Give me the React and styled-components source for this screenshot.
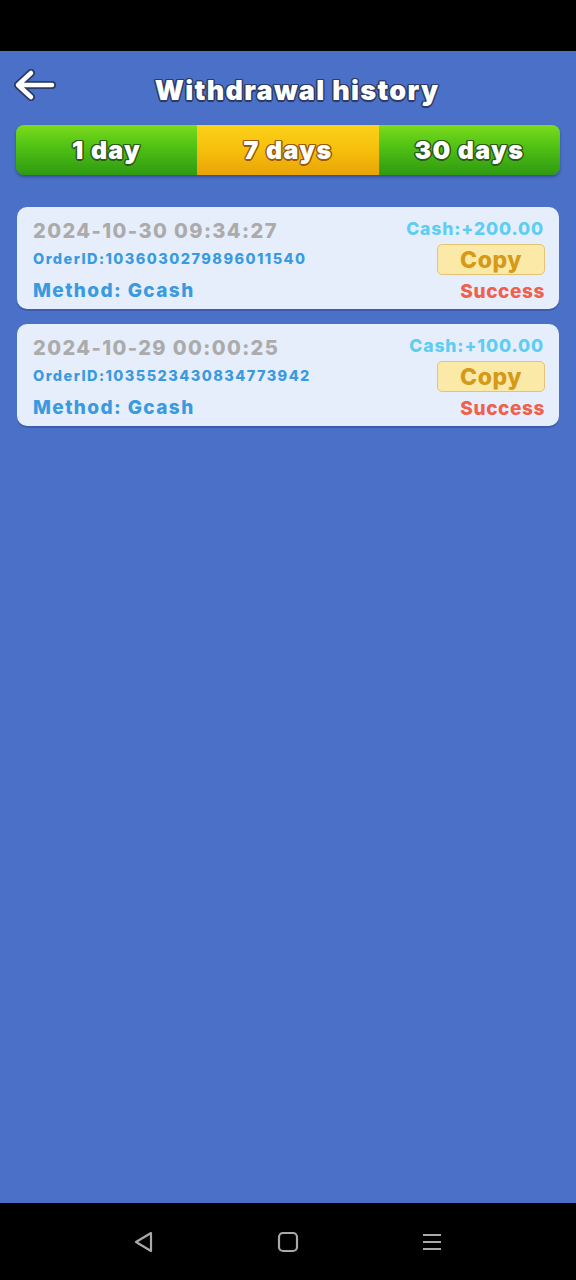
import React, { useState } from "react";
import styled, { createGlobalStyle } from "styled-components";

const GlobalStyle = createGlobalStyle`
  html, body { margin: 0; padding: 0; background: #000; }
  body { font-family: "Inter", "Noto Sans", sans-serif; }
`;

const Screen = styled.div`
  width: 576px;
  height: 1280px;
  display: flex;
  flex-direction: column;
  background: #000;
  overflow: hidden;
`;

const StatusBar = styled.div`
  height: 51px;
  flex-shrink: 0;
  background: #000;
`;

const Page = styled.div`
  flex: 1;
  background: #4b70c7;
  display: flex;
  flex-direction: column;
  padding: 0 16px;
`;

const Header = styled.div`
  height: 74px;
  display: flex;
  align-items: center;
  position: relative;
  justify-content: center;
`;

const BackButton = styled.button`
  position: absolute;
  left: -2px;
  top: 18px;
  background: none;
  border: none;
  padding: 0;
  width: 42px;
  height: 32px;
  cursor: pointer;
`;

const Title = styled.h1`
  margin: 4px 0 0 18px;
  font-size: 27px;
  font-weight: 900;
  color: #fff;
  letter-spacing: 1.3px;
  text-shadow:
    -1.5px 0 #2b3a66, 1.5px 0 #2b3a66, 0 -1.5px #2b3a66, 0 1.5px #2b3a66,
    -1px -1px #2b3a66, 1px 1px #2b3a66, -1px 1px #2b3a66, 1px -1px #2b3a66,
    0 2px 1px rgba(0, 0, 0, 0.3);
`;

const Tabs = styled.div`
  display: grid;
  grid-template-columns: 1fr 1fr 1fr;
  height: 50px;
  border-radius: 8px;
  overflow: hidden;
  box-shadow: 0 2px 3px rgba(20, 40, 90, 0.45);
`;

const Tab = styled.div`
  display: flex;
  align-items: center;
  justify-content: center;
  font-size: 25px;
  font-weight: 900;
  letter-spacing: 1.3px;
  color: #fff;
  background: ${(p) =>
    p.$active
      ? "linear-gradient(#fcd21a 0%, #f5bd0a 55%, #e9a308 100%)"
      : "linear-gradient(#7bdc1c 0%, #4fc014 45%, #2f9a12 100%)"};
  text-shadow: ${(p) => {
    const c = p.$active ? "#9a5a0c" : "#2a5a16";
    return `-1.5px 0 ${c}, 1.5px 0 ${c}, 0 -1.5px ${c}, 0 1.5px ${c}, -1px -1px ${c}, 1px 1px ${c}, -1px 1px ${c}, 1px -1px ${c}`;
  }};
`;

const List = styled.div`
  display: flex;
  flex-direction: column;
  gap: 15px;
  margin-top: 32px;
  padding: 0 1px;
`;

const Card = styled.div`
  height: 102px;
  box-sizing: border-box;
  background: #e6eefc;
  border-radius: 10px;
  box-shadow: 0 2px 0 #3b5dae;
  padding: 11px 14px 0 16px;
  display: flex;
  justify-content: space-between;
`;

const Col = styled.div`
  display: flex;
  flex-direction: column;
  align-items: ${(p) => (p.$right ? "flex-end" : "flex-start")};
`;

const DateText = styled.div`
  font-size: 20px;
  font-weight: 800;
  letter-spacing: 1.4px;
  color: #ababab;
  line-height: 26px;
`;

const OrderText = styled.div`
  font-size: 14.5px;
  font-weight: 800;
  letter-spacing: 1.45px;
  color: #3a9ae0;
  line-height: 18px;
  margin-top: 6px;
`;

const MethodText = styled.div`
  font-size: 19px;
  font-weight: 800;
  letter-spacing: 1.4px;
  color: #3a9ae0;
  line-height: 24px;
  margin-top: 11px;
`;

const CashText = styled.div`
  font-size: 17.5px;
  font-weight: 800;
  letter-spacing: 0.9px;
  color: #5dcdf2;
  line-height: 22px;
  margin-right: 1px;
`;

const CopyButton = styled.button`
  width: 108px;
  height: 31px;
  margin-top: 4px;
  background: #fbe9a8;
  border: 1.5px solid #e5c376;
  border-radius: 5px;
  font-family: inherit;
  font-size: 23px;
  font-weight: 800;
  letter-spacing: 0.5px;
  color: #d59a18;
  display: flex;
  align-items: center;
  justify-content: center;
  padding: 0;
  cursor: pointer;
`;

const StatusText = styled.div`
  font-size: 19px;
  font-weight: 800;
  letter-spacing: 0.6px;
  color: #f0604c;
  line-height: 24px;
  margin-top: 5px;
`;

const NavBar = styled.div`
  height: 77px;
  flex-shrink: 0;
  background: #000;
  display: flex;
  align-items: center;
  justify-content: space-between;
  padding: 0 133px 0 132px;
`;

const records = [
  { date: "2024-10-30 09:34:27", order: "1036030279896011540", cash: "200.00" },
  { date: "2024-10-29 00:00:25", order: "1035523430834773942", cash: "100.00" },
];

function ArrowLeft() {
  return (
    <svg width="42" height="32" viewBox="0 0 42 32">
      <path
        d="M17 4 L4 16 L17 28 M5 16 H38"
        fill="none"
        stroke="#2b3a66"
        strokeWidth="8"
        strokeLinecap="round"
        strokeLinejoin="round"
      />
      <path
        d="M17 4 L4 16 L17 28 M5 16 H38"
        fill="none"
        stroke="#fff"
        strokeWidth="4.5"
        strokeLinecap="round"
        strokeLinejoin="round"
      />
    </svg>
  );
}

export default function App() {
  const [tab, setTab] = useState(1);
  const tabs = ["1 day", "7 days", "30 days"];
  return (
    <Screen>
      <GlobalStyle />
      <StatusBar />
      <Page>
        <Header>
          <BackButton aria-label="back">
            <ArrowLeft />
          </BackButton>
          <Title>Withdrawal history</Title>
        </Header>
        <Tabs>
          {tabs.map((t, i) => (
            <Tab key={t} $active={i === tab} onClick={() => setTab(i)}>
              {t}
            </Tab>
          ))}
        </Tabs>
        <List>
          {records.map((r) => (
            <Card key={r.date}>
              <Col>
                <DateText>{r.date}</DateText>
                <OrderText>OrderID:{r.order}</OrderText>
                <MethodText>Method: Gcash</MethodText>
              </Col>
              <Col $right>
                <CashText>Cash:+{r.cash}</CashText>
                <CopyButton>Copy</CopyButton>
                <StatusText>Success</StatusText>
              </Col>
            </Card>
          ))}
        </List>
      </Page>
      <NavBar>
        <svg width="22" height="24" viewBox="0 0 22 24">
          <path
            d="M19 3 L4 12 L19 21 Z"
            fill="none"
            stroke="#a9a9a9"
            strokeWidth="2.2"
            strokeLinejoin="round"
          />
        </svg>
        <svg width="22" height="22" viewBox="0 0 22 22">
          <rect x="2" y="2" width="18" height="18" rx="4" fill="none" stroke="#a9a9a9" strokeWidth="2.2" />
        </svg>
        <svg width="22" height="22" viewBox="0 0 22 22">
          <path d="M2 4 H20 M2 11 H20 M2 18 H20" stroke="#a9a9a9" strokeWidth="2.2" />
        </svg>
      </NavBar>
    </Screen>
  );
}
